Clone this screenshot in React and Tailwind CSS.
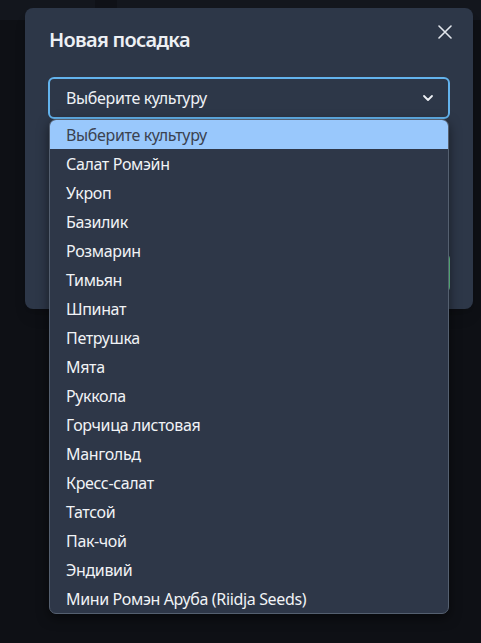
import React from "react";

const items = [
  "Салат Ромэйн",
  "Укроп",
  "Базилик",
  "Розмарин",
  "Тимьян",
  "Шпинат",
  "Петрушка",
  "Мята",
  "Руккола",
  "Горчица листовая",
  "Мангольд",
  "Кресс-салат",
  "Татсой",
  "Пак-чой",
  "Эндивий",
  "Мини Ромэн Аруба (Riidja Seeds)",
];

export default function App() {
  return (
    <div
      className="relative w-[481px] h-[643px] overflow-hidden bg-[#0e1015]"
      style={{ fontFamily: '"Noto Sans", "Open Sans", sans-serif' }}
    >
      {/* backdrop header strip */}
      <div className="flex h-[20px] bg-[#13161d]">
        <div className="w-[95px]" />
        <div className="w-[22px] bg-[#0f1117]" />
      </div>

      {/* modal */}
      <div className="absolute left-[25px] top-[8px] w-[448px] h-[301px] rounded-lg bg-[#2d3748] shadow-lg flex flex-col">
        <div className="px-6 pt-[17px] pb-[21px] text-[20px] leading-[30px] font-semibold tracking-[-0.7px] text-[#edf0f4]">
          Новая посадка
        </div>
        <button className="absolute right-[12px] top-[8px] w-8 h-8 flex items-center justify-center text-[#e2e6ec]">
          <svg width="14" height="14" viewBox="0 0 14 14" fill="none" stroke="currentColor" strokeWidth="1.6" strokeLinecap="round">
            <path d="M1 1L13 13M13 1L1 13" />
          </svg>
        </button>
        <div className="px-[23px] pt-[1px] pb-2">
          <div className="h-[42px] rounded-md border-2 border-[#63b3ed] flex items-center justify-between pl-[16px] pr-[14px] text-[16px] tracking-[-0.35px] text-[#eef1f5]">
            <span>Выберите культуру</span>
            <svg width="12" height="8" viewBox="0 0 12 8" fill="none" stroke="currentColor" strokeWidth="1.8" strokeLinecap="round" strokeLinejoin="round">
              <path d="M2 2l4 4 4-4" />
            </svg>
          </div>
        </div>
        <div className="flex-1" />
        <div className="flex justify-end pr-[23px] pb-4">
          <div className="h-10 w-[110px] rounded-md bg-[#68d391]" />
        </div>
      </div>

      {/* native dropdown popup */}
      <div className="absolute left-[49px] top-[119px] w-[400px] rounded-[7px] border border-[#556070] bg-[#2e3748] overflow-hidden shadow-[0_4px_12px_rgba(0,0,0,0.5)]">
        <div className="h-[29px] flex items-center pl-[16px] bg-[#99c8fc] text-[16px] tracking-[-0.35px] text-[#3b4250]">
          Выберите культуру
        </div>
        {items.map((it) => (
          <div key={it} className="h-[29px] flex items-center pl-[16px] text-[16px] tracking-[-0.35px] text-[#f1f3f6]">
            {it}
          </div>
        ))}
      </div>
    </div>
  );
}
